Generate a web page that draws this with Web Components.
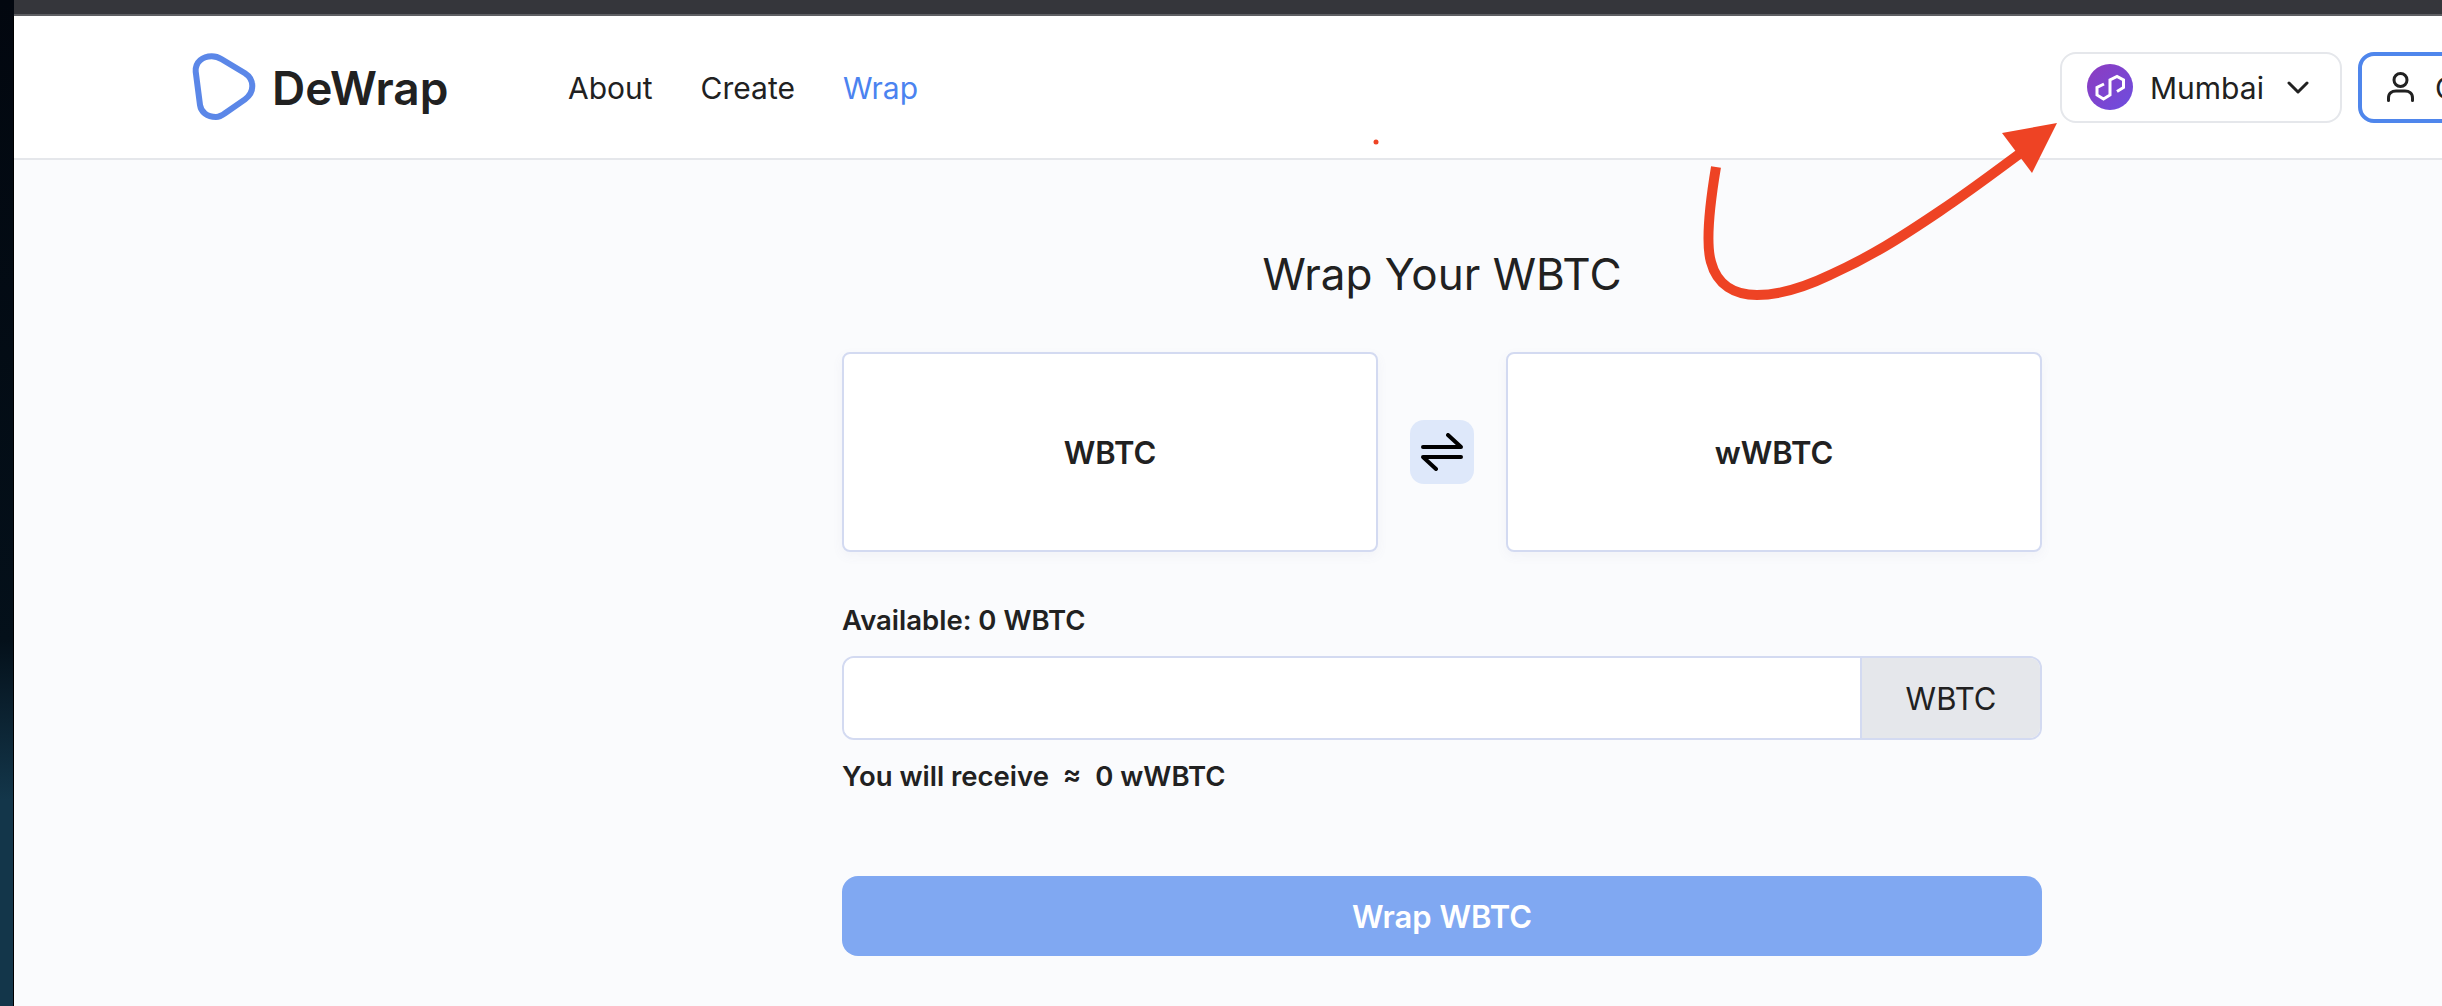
<!DOCTYPE html>
<html>
<head>
<meta charset="utf-8">
<title>DeWrap</title>
<style>
    html, body { margin: 0; height: 100%; overflow: hidden; }
    body { background: #0a141e; font-family: Inter, "Noto Sans", sans-serif; color: #212121; }
</style>
</head>
<body>
<app-window>
    <site-header></site-header>
    <wrap-form token="WBTC"></wrap-form>
</app-window>
<note-arrow></note-arrow>

<script>
customElements.define("app-window",
    class AppWindow extends HTMLElement {
        constructor() {
            super()
            this.attachShadow({ mode: "open" })
            this.shadowRoot.innerHTML = `
<style>
    :host {
        display: flex;
        flex-direction: column;
        height: 1006px;
        background: linear-gradient(#02070f 0, #04101a 640px, #13364a 800px, #13364a 100%);
    }
    #top { height: 14px; margin-left: 14px; background: #35363b; border-bottom: 2px solid #5e5f63; }
    #page { flex: 1; margin-left: 14px; background: #fafbfd; box-shadow: -1px 0 0 #000; }
</style>
<div id="top"></div>
<div id="page"><slot></slot></div>`
        }
    }
)

customElements.define("site-header",
    class SiteHeader extends HTMLElement {
        constructor() {
            super()
            this.attachShadow({ mode: "open" })
            this.shadowRoot.innerHTML = `
<style>
    :host {
        display: flex;
        align-items: center;
        height: 142px;
        padding-left: 178px;
        background: #fff;
        border-bottom: 2px solid #e5e7eb;
        white-space: nowrap;
    }
    #logo { display: flex; align-items: center; gap: 14px; width: 376px; font-size: 46px; font-weight: 580; }
    #logo svg { width: 66px; height: 70px; flex: none; }
    #logo span, nav a, .pill span { padding-top: 2px; }
    nav { display: flex; gap: 48px; font-size: 30px; }
    nav a.active { color: #4b83f0; }
    #right { margin-left: auto; display: flex; gap: 16px; }
    .pill {
        display: flex;
        align-items: center;
        box-sizing: border-box;
        height: 71px;
        border-radius: 16px;
        font-size: 30px;
    }
    #network { width: 282px; padding-left: 25px; border: 2px solid #e5e7eb; }
    #network .coin { width: 46px; height: 46px; flex: none; }
    #network span { margin-left: 17px; }
    #network .chev { width: 22px; height: 13px; margin-left: 23px; }
    #connect { width: 160px; margin-right: -76px; padding-left: 25px; border: 4px solid #4f86ec; flex: none; }
    #connect svg { width: 27px; height: 30px; flex: none; }
    #connect span { margin-left: 21px; }
</style>
<div id="logo">
    <svg viewBox="0 0 66 70">
        <path transform="translate(0 1)" d="M3.700 18.700C3 9 11 3.300 19.700 3.300C23 3.300 27 4.600 29.700 6.300L53 20.300C58 23.500 60.300 28 60.300 33C60.300 38.500 57.500 43 53 46.300L33 60.300C30 62.500 27.500 64 24 64C15 64 9 59 8 52Z" fill="none" stroke="#5b87e8" stroke-width="6"/>
    </svg>
    <span>DeWrap</span>
</div>
<nav><a>About</a><a>Create</a><a class="active">Wrap</a></nav>
<div id="right">
    <div id="network" class="pill">
        <svg class="coin" viewBox="0 0 46 46">
            <defs><linearGradient id="g" x1="0" y1="0" x2="1" y2="1"><stop offset="0" stop-color="#8e3bbf"/><stop offset="1" stop-color="#6c4ee0"/></linearGradient></defs>
            <circle cx="23" cy="23" r="23" fill="url(#g)"/>
            <path d="M17 20L10 23.500V31L16.500 35L23 31V16L30 12.500L36.500 16V23.500L30 27.500" fill="none" stroke="#fff" stroke-width="3"/>
        </svg>
        <span>Mumbai</span>
        <svg class="chev" viewBox="0 0 22 13"><path d="M2 2L11 11L20 2" fill="none" stroke="#212121" stroke-width="3" stroke-linecap="round" stroke-linejoin="round"/></svg>
    </div>
    <div id="connect" class="pill">
        <svg viewBox="0 0 27 30" fill="none" stroke="#212121" stroke-width="3" stroke-linecap="round"><circle cx="13.500" cy="8" r="6.500"/><path d="M1.500 28.500V26C1.500 21 5 19 9 19H18C22 19 25.500 21 25.500 26V28.500"/></svg>
        <span>Connect</span>
    </div>
</div>`
        }
    }
)

customElements.define("token-card",
    class TokenCard extends HTMLElement {
        constructor() {
            super()
            this.attachShadow({ mode: "open" })
            this.shadowRoot.innerHTML = `
<style>
    :host {
        display: flex;
        align-items: center;
        justify-content: center;
        box-sizing: border-box;
        height: 200px;
        background: #fff;
        border: 2px solid #d3daf1;
        border-radius: 8px;
        box-shadow: 0 4px 12px rgba(100, 110, 160, 0.06);
        font-size: 31px;
        font-weight: 570;
    }
</style>
<slot></slot>`
        }
    }
)

customElements.define("wrap-form",
    class WrapForm extends HTMLElement {
        constructor() {
            super()
            this.attachShadow({ mode: "open" })
            const token = this.getAttribute("token")
            this.shadowRoot.innerHTML = `
<style>
    :host { display: block; width: 1200px; margin-left: 828px; }
    h1 { margin: 0; padding-top: 87px; height: 105px; line-height: 54px; text-align: center; font-size: 44px; font-weight: 400; }
    #pair { display: grid; grid-template-columns: 536px 1fr 536px; align-items: center; }
    #swap {
        justify-self: center;
        display: flex;
        align-items: center;
        justify-content: center;
        width: 64px;
        height: 64px;
        background: #dee8fa;
        border-radius: 14px;
    }
    #swap svg { width: 42px; height: 38px; }
    .note { font-size: 27.500px; font-weight: 570; line-height: 32px; }
    #available { margin-top: 52px; }
    #field { display: flex; height: 84px; margin-top: 20px; box-sizing: border-box; border: 2px solid #d3daf1; border-radius: 12px; overflow: hidden; }
    #field .blank { flex: 1; background: #fff; border-right: 2px solid #d3daf1; }
    #field .unit { display: flex; align-items: center; justify-content: center; width: 178px; background: #e5e7eb; font-size: 31px; }
    #receive { margin-top: 20px; white-space: pre; }
    #submit {
        display: flex;
        align-items: center;
        justify-content: center;
        height: 80px;
        margin-top: 84px;
        background: #80a8f2;
        border-radius: 16px;
        color: #fff;
        font-size: 31px;
        font-weight: 570;
    }
</style>
<h1>Wrap Your ${token}</h1>
<div id="pair">
    <token-card>${token}</token-card>
    <div id="swap">
        <svg viewBox="0 0 42 38" fill="none" stroke="#000" stroke-width="4" stroke-linecap="round" stroke-linejoin="round">
            <path d="M2 14H40L27 2"/><path d="M40 24H2L15 36"/>
        </svg>
    </div>
    <token-card>w${token}</token-card>
</div>
<div id="available" class="note">Available: 0 ${token}</div>
<div id="field"><div class="blank"></div><div class="unit">${token}</div></div>
<div id="receive" class="note">You will receive  ≈  0 w${token}</div>
<div id="submit">Wrap ${token}</div>`
        }
    }
)

// the red annotation drawn over the screenshot
customElements.define("note-arrow",
    class NoteArrow extends HTMLElement {
        constructor() {
            super()
            this.attachShadow({ mode: "open" })
            this.shadowRoot.innerHTML = `
<style>
    :host { position: absolute; left: 0; top: 0; width: 2442px; height: 1006px; pointer-events: none; }
    svg { display: block; }
</style>
<svg width="2442" height="1006" viewBox="0 0 2442 1006">
    <path d="M1716 167C1708 215 1706 245 1711 262C1717 285 1735 295 1757 295C1780 295 1805 287 1830 275C1870 257 1900 238 1940 211C1970 191 1995 172 2022 152" fill="none" stroke="#ee4324" stroke-width="10"/>
    <path d="M2057 123L2002 133L2032 173Z" fill="#ee4324"/>
    <circle cx="1376" cy="142" r="2.500" fill="#ee4324"/>
</svg>`
        }
    }
)
</script>
</body>
</html>
